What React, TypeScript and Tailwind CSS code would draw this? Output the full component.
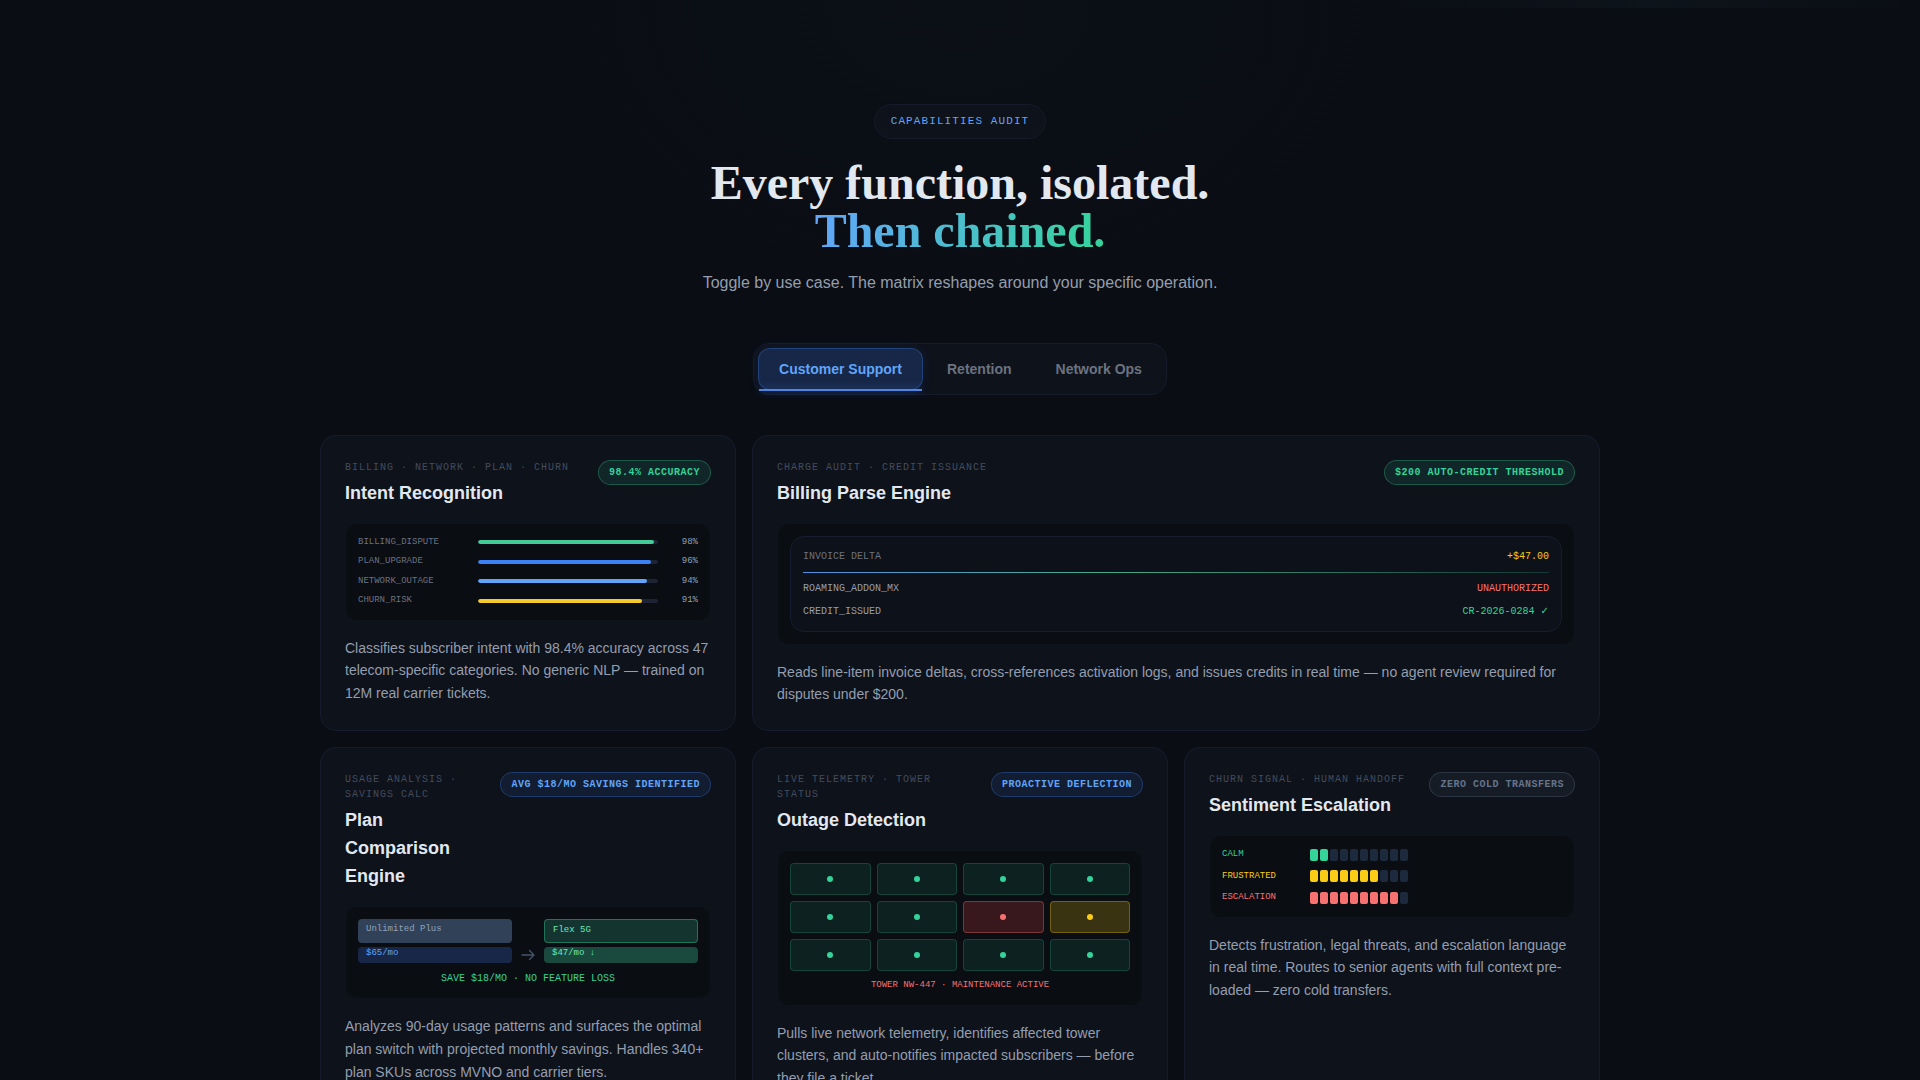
import { useState, type ReactNode } from 'react'
import clsx from 'clsx'

const TABS = ['Customer Support', 'Retention', 'Network Ops']

const INTENTS = [
  { label: 'BILLING_DISPUTE', value: 98, bar: 'bg-[#43cb98]' },
  { label: 'PLAN_UPGRADE', value: 96, bar: 'bg-[#3b82f6]' },
  { label: 'NETWORK_OUTAGE', value: 94, bar: 'bg-[#60a5fa]' },
  { label: 'CHURN_RISK', value: 91, bar: 'bg-[#f5cb2c]' },
]

const TOWERS = ['ok', 'ok', 'ok', 'ok', 'ok', 'ok', 'down', 'warn', 'ok', 'ok', 'ok', 'ok']

const TOWER_CELL: Record<string, string> = {
  ok: 'border-[#34d399]/20 bg-[#34d399]/10',
  down: 'border-[#f87171]/35 bg-[#ef4444]/20',
  warn: 'border-[#facc15]/30 bg-[#facc15]/20',
}

const TOWER_DOT: Record<string, string> = {
  ok: 'bg-[#34d399]',
  down: 'bg-[#f87171]',
  warn: 'bg-[#facc15]',
}

const MOODS = [
  { label: 'CALM', level: 2, text: 'text-[#34d399]', fill: 'bg-[#34d399]' },
  { label: 'FRUSTRATED', level: 7, text: 'text-[#facc15]', fill: 'bg-[#facc15]' },
  { label: 'ESCALATION', level: 9, text: 'text-[#f87171]', fill: 'bg-[#f87171]' },
]

const BADGE = {
  green: 'border-[#34d399]/30 bg-[#34d399]/10 text-[#34d399]',
  blue: 'border-[#3b82f6]/30 bg-[#3b82f6]/10 text-[#60a5fa]',
  gray: 'border-[#64748b]/30 bg-[#64748b]/10 text-[#64748b]',
}

const mono = 'font-["Liberation_Mono","DejaVu_Sans",monospace]'

type CardProps = {
  eyebrow: string
  title: string
  badge: string
  tone: keyof typeof BADGE
  text: string
  className?: string
  children: ReactNode
}

function Card({ eyebrow, title, badge, tone, text, className, children }: CardProps) {
  return (
    <article className={clsx('rounded-2xl border border-[#171b2d] bg-[#0e121b] p-6', className)}>
      <header className="flex items-start justify-between gap-4">
        <div>
          <p className={clsx(mono, 'text-[10px] leading-normal tracking-[1px] text-[#434c5c]')}>{eyebrow}</p>
          <h3 className="mt-1 text-lg font-semibold text-slate-200">{title}</h3>
        </div>
        <span className={clsx(mono, 'shrink-0 whitespace-nowrap rounded-full border px-2.5 py-1 text-[10px] leading-normal font-bold tracking-[0.5px]', BADGE[tone])}>
          {badge}
        </span>
      </header>
      <div className={clsx(mono, 'mt-4 rounded-xl border border-[#0f131c] bg-[#0a0d12] p-3')}>{children}</div>
      <p className="mt-4 text-sm leading-relaxed text-[#949eae]">{text}</p>
    </article>
  )
}

function IntentBars() {
  return (
    <div className="flex flex-col gap-1.5 text-[9px] leading-normal">
      {INTENTS.map((i) => (
        <div key={i.label} className="flex items-center">
          <span className="w-[120px] text-[#6b7280]">{i.label}</span>
          <div className="h-1 flex-1 overflow-hidden rounded-full bg-[#1e2436]">
            <div className={clsx('h-full rounded-full', i.bar)} style={{ width: `${i.value}%` }} />
          </div>
          <span className="w-10 text-right text-slate-400">{i.value}%</span>
        </div>
      ))}
    </div>
  )
}

function InvoiceDelta() {
  return (
    <div className="flex flex-col gap-2 rounded-[14px] border border-[#181c30] bg-[#0d111a] p-3 text-[10px] leading-normal">
      <div className="flex justify-between">
        <span className="text-[#6b7280]">INVOICE DELTA</span>
        <span className="text-[#facc15]">+$47.00</span>
      </div>
      <div className="h-px bg-linear-to-r/srgb from-[#4f8fe6] via-[#45ac8c] via-40% to-[#34d399]/20" />
      <div className="flex justify-between">
        <span className="text-[#949eae]">ROAMING_ADDON_MX</span>
        <span className="text-[#f87171]">UNAUTHORIZED</span>
      </div>
      <div className="flex justify-between">
        <span className="text-[#949eae]">CREDIT_ISSUED</span>
        <span className="text-[#34d399]">CR-2026-0284 ✓</span>
      </div>
    </div>
  )
}

function PlanSwap() {
  return (
    <>
      <div className="flex items-end gap-2 text-[9px] leading-normal">
        <div className="flex flex-1 flex-col gap-1">
          <div className="h-6 rounded bg-slate-700 px-2 py-1 text-slate-400">Unlimited Plus</div>
          <div className="h-4 rounded bg-[#182747] px-2 text-[#60a5fa]">$65/mo</div>
        </div>
        <svg className="size-4 text-slate-600" viewBox="0 0 16 16" fill="none" stroke="currentColor" strokeWidth="1.3" strokeLinecap="round" strokeLinejoin="round">
          <path d="M2 8h12M9.5 3.5 14 8l-4.5 4.5" />
        </svg>
        <div className="flex flex-1 flex-col gap-1">
          <div className="h-6 rounded border border-[#34d399]/40 bg-[#14352f] px-2 py-1 text-[#6ee7b7]">Flex 5G</div>
          <div className="h-4 rounded bg-[#1a4a3e] px-2 text-[#6ee7b7]">$47/mo ↓</div>
        </div>
      </div>
      <p className="mt-2 text-center text-[10px] leading-normal text-[#34d399]">SAVE $18/MO · NO FEATURE LOSS</p>
    </>
  )
}

function TowerGrid() {
  return (
    <>
      <div className="grid grid-cols-4 gap-1.5">
        {TOWERS.map((state, i) => (
          <div key={i} className={clsx('flex h-8 items-center justify-center rounded border', TOWER_CELL[state])}>
            <span className={clsx('size-1.5 rounded-full', TOWER_DOT[state])} />
          </div>
        ))}
      </div>
      <p className="mt-2 text-center text-[9px] leading-normal text-[#f87171]">TOWER NW-447 · MAINTENANCE ACTIVE</p>
    </>
  )
}

function MoodMeter() {
  return (
    <div className="flex flex-col gap-2 text-[9px] leading-normal">
      {MOODS.map((m) => (
        <div key={m.label} className="flex items-center gap-2">
          <span className={clsx('w-20', m.text)}>{m.label}</span>
          <div className="flex gap-0.5">
            {Array.from({ length: 10 }, (_, i) => (
              <span key={i} className={clsx('h-3 w-2 rounded-xs', i < m.level ? m.fill : 'bg-slate-800')} />
            ))}
          </div>
        </div>
      ))}
    </div>
  )
}

export default function App() {
  const [tab, setTab] = useState(0)

  return (
    <div className='relative h-screen overflow-hidden bg-[#0a0d14] font-["Liberation_Sans",sans-serif]'>
      {/* glow bleeding in from the section above */}
      <div className="absolute top-0 right-0 h-2 w-[540px] bg-linear-to-r from-transparent via-[#0c151b] to-transparent" />
      <div className="absolute inset-x-[25%] top-0 h-[340px] bg-[radial-gradient(ellipse_at_top,#0b1016,transparent_70%)]" />

      <section className="relative mx-auto max-w-[1328px] px-6 pt-[104px] pb-24">
        <div className="flex flex-col items-center text-center">
          <span className={clsx(mono, 'rounded-full border border-[#161a2b] bg-[#0e121b] px-4 py-2 text-[11px] leading-normal tracking-[1.1px] text-[#60a5fa]')}>
            CAPABILITIES AUDIT
          </span>
          <h2 className='mt-5 font-["Liberation_Serif",serif] text-5xl leading-none font-bold text-slate-200'>
            Every function, isolated.
            <br />
            <span className="bg-linear-to-r from-[#60a5fa] to-[#34d399] bg-clip-text text-transparent">Then chained.</span>
          </h2>
          <p className="mt-4 text-base text-[#949eae]">Toggle by use case. The matrix reshapes around your specific operation.</p>

          <div role="tablist" className="mt-12 flex gap-1 rounded-2xl border border-[#161a2b] bg-[#0e121b] p-1">
            {TABS.map((name, i) => (
              <button
                key={name}
                type="button"
                role="tab"
                aria-selected={i === tab}
                onClick={() => setTab(i)}
                className={clsx(
                  'relative rounded-xl px-5 py-2.5 text-sm font-semibold',
                  i === tab
                    ? 'border border-[#3b82f6]/30 bg-[#172747] text-[#60a5fa] shadow-[0_0_12px_rgba(59,130,246,0.1)]'
                    : 'text-[#6b7280]',
                )}
              >
                {name}
                {i === tab && <span className="absolute inset-x-0 -bottom-0.5 h-0.5 bg-[#4f86e4] shadow-[0_0_8px_rgba(59,130,246,0.5)]" />}
              </button>
            ))}
          </div>
        </div>

        <div className="mt-10 grid grid-cols-3 gap-4">
          <Card
            eyebrow="BILLING · NETWORK · PLAN · CHURN"
            title="Intent Recognition"
            badge="98.4% ACCURACY"
            tone="green"
            text="Classifies subscriber intent with 98.4% accuracy across 47 telecom-specific categories. No generic NLP — trained on 12M real carrier tickets."
          >
            <IntentBars />
          </Card>
          <Card
            className="col-span-2"
            eyebrow="CHARGE AUDIT · CREDIT ISSUANCE"
            title="Billing Parse Engine"
            badge="$200 AUTO-CREDIT THRESHOLD"
            tone="green"
            text="Reads line-item invoice deltas, cross-references activation logs, and issues credits in real time — no agent review required for disputes under $200."
          >
            <InvoiceDelta />
          </Card>
          <Card
            eyebrow="USAGE ANALYSIS · SAVINGS CALC"
            title="Plan Comparison Engine"
            badge="AVG $18/MO SAVINGS IDENTIFIED"
            tone="blue"
            text="Analyzes 90-day usage patterns and surfaces the optimal plan switch with projected monthly savings. Handles 340+ plan SKUs across MVNO and carrier tiers."
          >
            <PlanSwap />
          </Card>
          <Card
            eyebrow="LIVE TELEMETRY · TOWER STATUS"
            title="Outage Detection"
            badge="PROACTIVE DEFLECTION"
            tone="blue"
            text="Pulls live network telemetry, identifies affected tower clusters, and auto-notifies impacted subscribers — before they file a ticket."
          >
            <TowerGrid />
          </Card>
          <Card
            eyebrow="CHURN SIGNAL · HUMAN HANDOFF"
            title="Sentiment Escalation"
            badge="ZERO COLD TRANSFERS"
            tone="gray"
            text="Detects frustration, legal threats, and escalation language in real time. Routes to senior agents with full context pre-loaded — zero cold transfers."
          >
            <MoodMeter />
          </Card>
        </div>
      </section>
    </div>
  )
}
